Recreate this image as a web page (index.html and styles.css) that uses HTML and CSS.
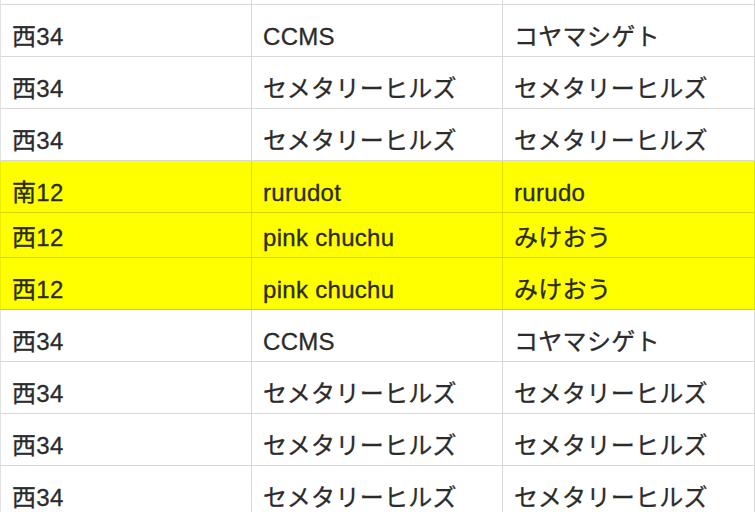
FILE: index.html
```html
<!DOCTYPE html>
<html lang="ja">
<head>
<meta charset="utf-8">
<link rel="stylesheet" href="styles.css">
</head>
<body>
<div class="sheet">
  <div class="row"><div class="cell">西34</div><div class="cell">セメタリーヒルズ</div><div class="cell">セメタリーヒルズ</div></div>
  <div class="row"><div class="cell">西34</div><div class="cell">CCMS</div><div class="cell">コヤマシゲト</div></div>
  <div class="row"><div class="cell">西34</div><div class="cell">セメタリーヒルズ</div><div class="cell">セメタリーヒルズ</div></div>
  <div class="row"><div class="cell">西34</div><div class="cell">セメタリーヒルズ</div><div class="cell">セメタリーヒルズ</div></div>
  <div class="row hl"><div class="cell">南12</div><div class="cell">rurudot</div><div class="cell">rurudo</div></div>
  <div class="row hl short"><div class="cell">西12</div><div class="cell">pink chuchu</div><div class="cell">みけおう</div></div>
  <div class="row hl"><div class="cell">西12</div><div class="cell">pink chuchu</div><div class="cell">みけおう</div></div>
  <div class="row"><div class="cell">西34</div><div class="cell">CCMS</div><div class="cell">コヤマシゲト</div></div>
  <div class="row"><div class="cell">西34</div><div class="cell">セメタリーヒルズ</div><div class="cell">セメタリーヒルズ</div></div>
  <div class="row"><div class="cell">西34</div><div class="cell">セメタリーヒルズ</div><div class="cell">セメタリーヒルズ</div></div>
  <div class="row"><div class="cell">西34</div><div class="cell">セメタリーヒルズ</div><div class="cell">セメタリーヒルズ</div></div>
</div>
</body>
</html>
```
FILE: styles.css
```css
html, body {
  margin: 0;
  padding: 0;
  background: #ffffff;
  overflow: hidden;
}
.sheet {
  margin-top: -47px;
  width: 755px;
  font-family: "Liberation Sans", "Noto Sans CJK JP", sans-serif;
  font-size: 24px;
  color: #2b2b2b;
  -webkit-text-stroke: 0.3px currentColor;
}
.row {
  display: grid;
  grid-template-columns: 252px 251px 252px;
  height: 52px;
}
.row.short {
  height: 45px;
}
.cell {
  box-sizing: border-box;
  height: 100%;
  display: flex;
  align-items: flex-end;
  padding: 0 10px 7px 11px;
  line-height: 24px;
  white-space: nowrap;
  letter-spacing: 0.3px;
  border-right: 1px solid #d8d8d8;
  border-bottom: 1px solid #d8d8d8;
}
.cell:first-child {
  border-left: 1px solid #e2e2e2;
}
.row.hl {
  background: #ffff00;
  color: #2a2a0c;
}
.row.hl .cell {
  border-right-color: #dede00;
  border-bottom-color: #d6d400;
}
.row.hl .cell:first-child {
  border-left-color: #ecec00;
}
```
